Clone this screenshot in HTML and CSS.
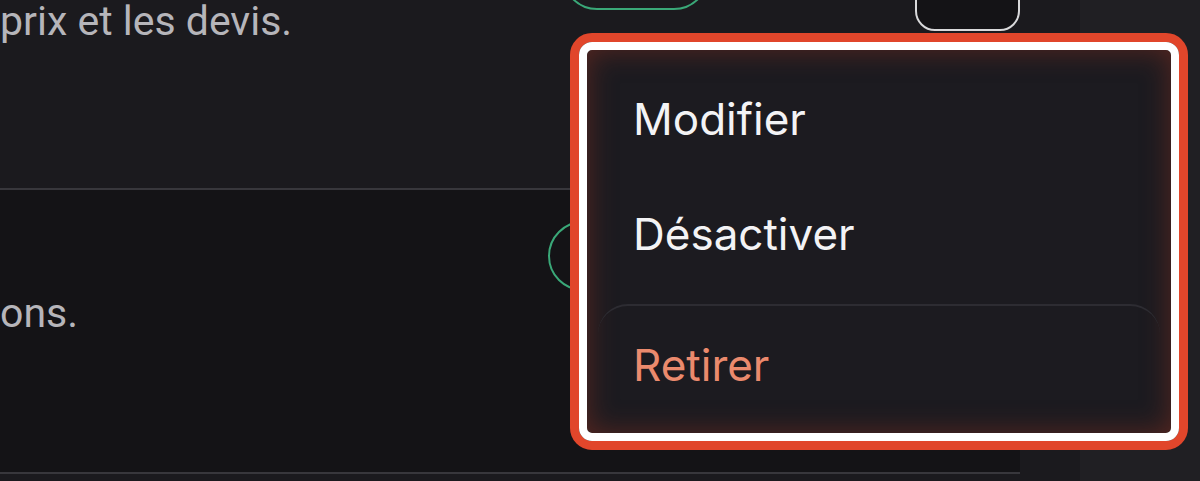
FILE: index.html
```html
<!DOCTYPE html>
<html lang="fr">
<head>
    <meta charset="UTF-8">
    <meta name="viewport" content="width=device-width, initial-scale=1.0">
    <title>Tarifs</title>
    <link rel="stylesheet" href="styles.css">
</head>
<body>
    <div class="page">
        <main class="content">
            <div class="list">
                <div class="row row-first">
                    <p class="desc desc-first">prix et les devis.</p>
                    <span class="badge badge-first"></span>
                    <button class="btn-more"></button>
                </div>
                <div class="row row-second">
                    <p class="desc desc-second">ons.</p>
                    <span class="badge badge-second"></span>
                </div>
            </div>
        </main>
        <aside class="side"></aside>
    </div>

    <div class="highlight">
        <ul class="menu">
            <li class="menu-item">Modifier</li>
            <li class="menu-item">Désactiver</li>
            <li class="menu-item danger">Retirer</li>
        </ul>
    </div>
</body>
</html>
```

FILE: styles.css
```css
* {
    margin: 0;
    padding: 0;
    box-sizing: border-box;
}

body {
    background-color: #1b1a1e;
    font-family: Roboto, "Liberation Sans", sans-serif;
    overflow: hidden;
}

.page {
    display: flex;
    height: 481px;
}

.content {
    width: 1080px;
    padding-right: 60px;
    background-color: #1b1a1e;
}

.side {
    flex-grow: 1;
    background-color: #201f23;
}

.list {
    width: 1020px;
}

.row {
    display: flex;
    align-items: flex-start;
    border-bottom: 2px solid #38373c;
}

.row-first {
    height: 190px;
}

.row-second {
    height: 284px;
    background-color: #141316;
}

.desc {
    color: #b6b5ba;
    font-size: 41px;
    line-height: 46px;
}

.desc-first {
    width: 562px;
    line-height: 42px;
}

.desc-second {
    width: 548px;
    margin-top: 100px;
}

.badge {
    display: block;
    height: 70px;
    border: 2px solid #3aa878;
    border-radius: 35px;
}

.badge-first {
    width: 147px;
    margin-top: -60px;
}

.badge-second {
    width: 147px;
    margin-top: 31px;
}

.btn-more {
    width: 105px;
    height: 70px;
    margin-top: -39px;
    margin-left: auto;
    background-color: #141316;
    border: 2px solid #d9d9db;
    border-radius: 20px;
}

/* dropdown, framed by the red/white highlight */
.highlight {
    position: absolute;
    left: 570px;
    top: 33px;
    width: 618px;
    height: 417px;
    border: 9px solid #e1462b;
    border-radius: 22px;
}

.menu {
    list-style-type: none;
    height: 100%;
    padding: 11px;
    border: 8px solid #ffffff;
    border-radius: 13px;
    background-color: #1c1b20;
    box-shadow: inset 0 0 28px rgba(150, 50, 32, 0.5);
    font-family: Inter, "Noto Sans", sans-serif;
}

.menu-item {
    display: flex;
    align-items: center;
    height: 115px;
    padding: 0 35px;
    font-size: 44px;
    color: #f3f3f5;
}

.menu-item.danger {
    height: 119px;
    margin-top: 13px;
    border-top: 2px solid #2d2c32;
    border-radius: 30px 30px 0 0;
    color: #eb8a6d;
}
```
